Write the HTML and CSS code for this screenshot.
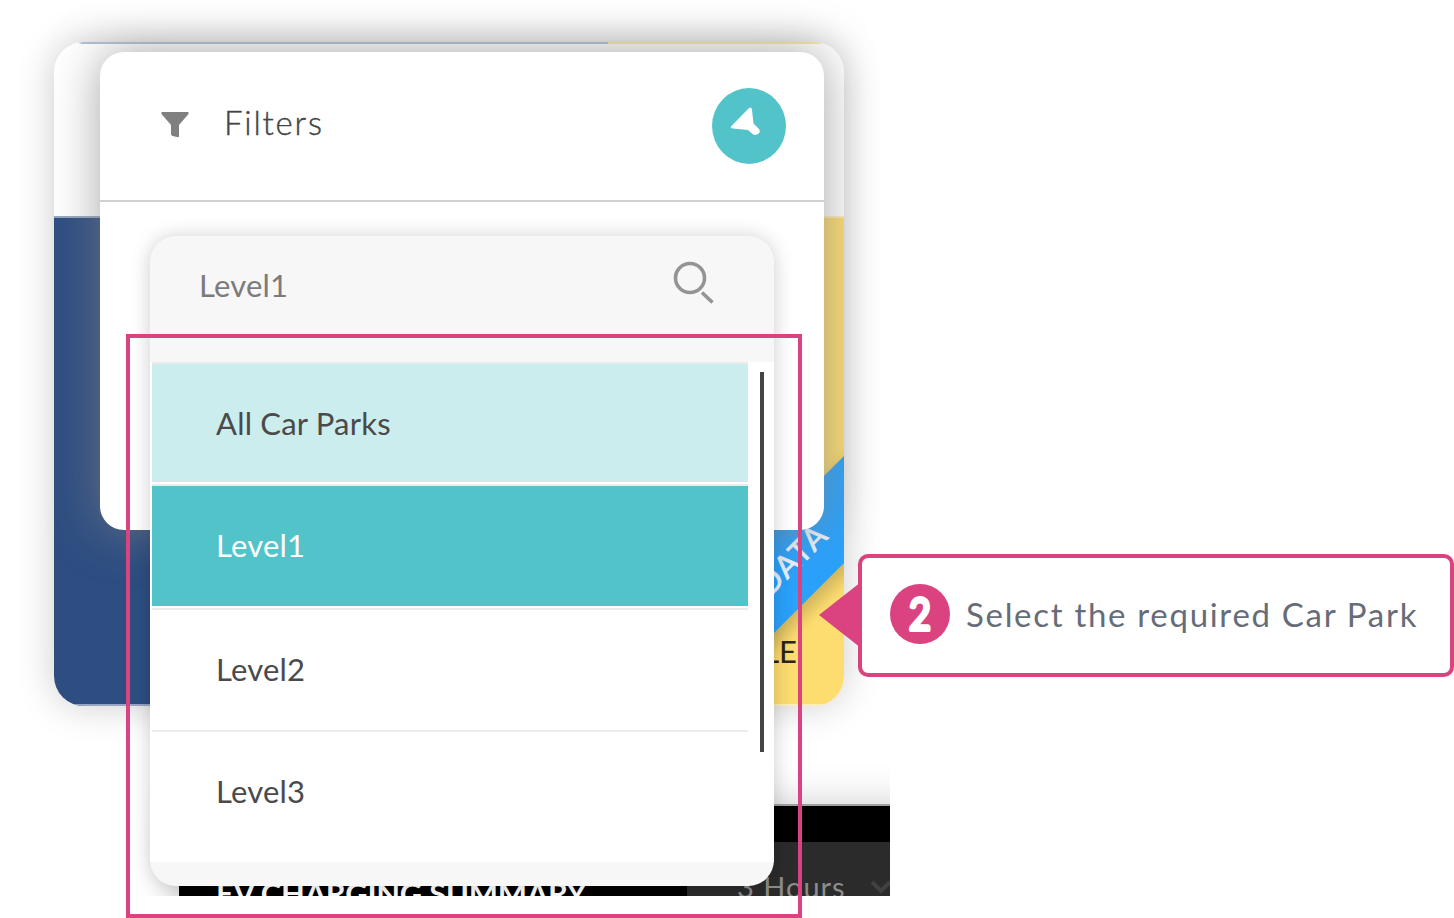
FILE: index.html
```html
<!DOCTYPE html>
<html lang="en">
<head>
<meta charset="utf-8">
<title>Car park filters</title>
<link rel="stylesheet" href="styles.css">
</head>
<body>
<main class="canvas">
  <div class="app">
    <section class="card">
      <div class="card-head"></div>
      <div class="card-body">
        <div class="half blue"></div>
        <div class="half yellow"><span class="avail">AVAILABLE</span></div>
      </div>
      <svg class="ribbon" width="180" height="260" viewBox="0 0 180 260">
        <defs><filter id="soft" x="-20%" y="-20%" width="140%" height="140%"><feGaussianBlur stdDeviation="7"/></filter></defs>
        <path d="M190 1 190 117-20 327-20 211Z" fill="#000" opacity=".17" filter="url(#soft)"/>
        <path d="M180 6V113L-20 313V206Z" fill="#2aa1fb"/>
        <text class="ribbon-text" transform="translate(165 88) rotate(-45)" text-anchor="end" textLength="84">DATA</text>
      </svg>
    </section>

    <section class="summary">
      <h2 class="summary-title">EV CHARGING SUMMARY</h2>
      <div class="period"><span class="hours">3 Hours</span>
        <svg width="24" height="16" viewBox="0 0 24 16"><path d="M3 2 12 11 21 2" fill="none" stroke="#414141" stroke-width="4"/></svg>
      </div>
    </section>

    <section class="filters">
      <header class="filters-head">
        <svg class="funnel" width="28" height="26" viewBox="0 0 28 26"><path d="M1 0H27Q28 0 27.500 2L18 13V24Q18 26 16 25L11.500 24Q10 23.500 10 22V13L.5 2Q0 0 1 0Z" fill="#808080"/></svg>
        <h1 class="filters-title">Filters</h1>
        <button class="pin" aria-label="Unpin">
          <svg width="74" height="76" viewBox="0 0 74 76"><path d="M19 38.500 36.500 20.500Q39.500 18 40 22L41.500 35.500 47 41Q49 44 46 46Q42.500 48 40 45.500L36 42 21 40.500Q18 40 19 38.500Z" fill="#fff"/></svg>
        </button>
      </header>
    </section>

    <section class="select">
      <div class="select-field">
        <span>Level1</span>
        <svg width="42" height="43" viewBox="0 0 42 43" fill="none" stroke="#949494" stroke-width="3.600"><circle cx="17" cy="17" r="14.500"/><path d="M29 31.500 39.500 41.500"/></svg>
      </div>
      <div class="select-list">
        <ul class="options">
          <li class="option tint">All Car Parks</li>
          <li class="option active">Level1</li>
          <li class="option">Level2</li>
          <li class="option">Level3</li>
        </ul>
        <div class="scrollbar"></div>
      </div>
    </section>
  </div>

  <div class="highlight"></div>
  <aside class="callout">
    <svg class="arrow" width="42" height="66" viewBox="0 0 42 66"><path d="M0 33 42 0V66Z" fill="#db4380"/></svg>
    <svg class="step" width="60" height="60" viewBox="0 0 60 60"><circle cx="30" cy="30" r="30" fill="#db4380"/><text class="step-number" transform="translate(30 46) scale(.84 1)" text-anchor="middle">2</text></svg>
    <span class="callout-text">Select the required Car Park</span>
  </aside>
</main>
</body>
</html>
```
FILE: styles.css
```css
* { box-sizing: border-box; }
body { margin: 0; background: #fff; font-family: Lato, "Open Sans", sans-serif; }
h1, h2, ul { margin: 0; padding: 0; font-weight: 400; list-style: none; }
.canvas { position: relative; width: 1454px; height: 918px; overflow: hidden; }
.app { position: relative; width: 890px; height: 896px; overflow: hidden; }

.card { position: absolute; left: 54px; top: 42px; width: 790px; height: 664px; display: flex; flex-direction: column; border-radius: 30px; background: #fff; box-shadow: 0 0 38px rgba(0,0,0,.2); }
.card-head { height: 174px; border-radius: 30px 30px 0 0; background: linear-gradient(90deg, #fff 24px, #b0bfd8 28px, #b0bfd8 554px, #fbe6a0 554px, #fbe6a0 766px, #fff 768px) 0 0 / 100% 2px no-repeat #fff; }
.card-body { flex: 1; display: flex; border-radius: 0 0 30px 30px; overflow: hidden; }
.half { border-top: 2px solid #96a6c0; border-bottom: 2px solid #96a6c0; }
.blue { width: 554px; background: #2e4e82; }
.yellow { flex: 1; display: flex; align-items: flex-end; justify-content: flex-end; padding: 0 47px 35px 0; background: #fddc70; border-color: #fdeeb8; }
.avail { font-size: 31px; line-height: 36px; color: #2b2611; }
.ribbon { position: absolute; right: 0; top: 408px; }
.ribbon-text { font-size: 31px; fill: #e9f1f8; stroke: #e9f1f8; stroke-width: .7px; }

.summary { position: absolute; left: 179px; top: 804px; width: 760px; height: 140px; background: #000; border-top: 2px solid #a0a0a0; box-shadow: 0 0 38px rgba(0,0,0,.2); display: flex; padding-top: 36px; }
.summary-title { width: 508px; padding: 33px 0 0 37px; font-size: 31px; line-height: 36px; font-weight: 700; letter-spacing: -.3px; color: #fff; white-space: nowrap; }
.period { flex: 1; display: flex; gap: 24px; padding: 27px 0 0 50px; background: #2b2b2b; color: #8c8c8c; font-size: 29px; line-height: 36px; }
.period svg { margin-top: 11px; }
.hours { width: 108px; letter-spacing: 1px; white-space: nowrap; }

.filters { position: absolute; left: 100px; top: 52px; width: 724px; height: 478px; border-radius: 24px; background: #fff; box-shadow: 0 0 48px rgba(128,128,128,.7); }
.filters-head { height: 150px; display: flex; align-items: flex-start; padding: 36px 38px 0 61px; border-bottom: 2px solid #d0d0d0; }
.funnel { margin-top: 24px; }
.filters-title { margin: 14px 0 0 35px; font-size: 33px; line-height: 40px; font-weight: 300; letter-spacing: 1.800px; color: #444; -webkit-text-stroke: .4px #444; }
.pin { margin-left: auto; padding: 0; border: 0; width: 74px; height: 76px; border-radius: 50%; background: #53c3ca; }
.pin svg { display: block; }

.select { position: absolute; left: 150px; top: 236px; width: 624px; height: 650px; border-radius: 26px; background: #f7f7f7; box-shadow: 0 1px 20px rgba(0,0,0,.2); }
.select-field { height: 126px; display: flex; justify-content: space-between; align-items: flex-start; padding: 25px 59px 0 49px; font-size: 31px; line-height: 48px; letter-spacing: .2px; color: #7b7b7b; }
.select-list { height: 500px; display: flex; justify-content: space-between; background: #fff; padding: 0 10px 0 0; }
.options { width: 600px; }
.option { width: 596px; height: 120px; margin: 0 0 2px 2px; padding-left: 64px; font-size: 31px; line-height: 118px; letter-spacing: .2px; color: #4a4a4a; box-shadow: 0 -2px 0 #ebebeb; }
.option:first-child { margin-top: 2px; }
.option.tint { height: 118px; margin-bottom: 4px; background: #cceded; }
.option.active { background: #53c3ca; color: #fff; margin-bottom: 4px; }
.scrollbar { width: 4px; height: 380px; margin-top: 10px; background: #444; }

.highlight { position: absolute; left: 126px; top: 334px; width: 676px; height: 584px; border: 4px solid #db4380; }
.callout { position: absolute; left: 858px; top: 554px; width: 596px; height: 123px; display: flex; align-items: center; padding: 0 0 3px 28px; border: 4px solid #db4380; border-radius: 10px; background: #fff; }
.arrow { position: absolute; left: -43px; top: 24px; }
.step { flex: none; }
.step-number { font-size: 45px; fill: #fff; stroke: #fff; stroke-width: 4px; stroke-linejoin: round; }
.callout-text { margin-left: 16px; font-size: 33px; line-height: 40px; letter-spacing: 1.700px; color: #666c78; white-space: nowrap; }
```
